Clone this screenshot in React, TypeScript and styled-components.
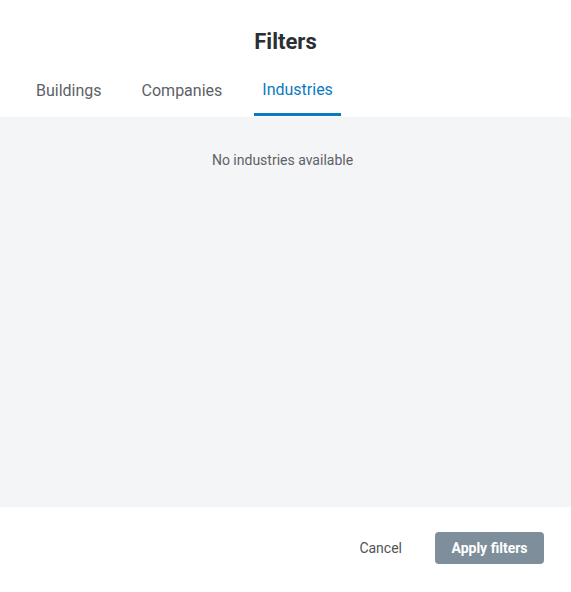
import React, { useState } from "react";
import styled, { createGlobalStyle } from "styled-components";

const Global = createGlobalStyle`
  html, body { margin: 0; padding: 0; background: #ffffff; }
  body { font-family: Roboto, "Noto Sans", Arial, sans-serif; -webkit-font-smoothing: antialiased; }
  * { box-sizing: border-box; }
`;

const Dialog = styled.div`
  width: 571px;
  height: 592px;
  display: flex;
  flex-direction: column;
  background: #ffffff;
`;

const Header = styled.header`
  display: flex;
  flex-direction: column;
  align-items: stretch;
  padding-top: 28px;
`;

const Title = styled.h1`
  margin: 0;
  text-align: center;
  font-size: 22px;
  line-height: 28px;
  font-weight: 700;
  color: #2b2e33;
`;

const TabList = styled.div`
  display: flex;
  gap: 24px;
  padding: 0 28px;
  margin-top: 20px;
`;

const Tab = styled.button<{ $active?: boolean }>`
  border: none;
  background: none;
  padding: 3px 8px 0;
  height: 41px;
  display: flex;
  align-items: flex-start;
  font-family: inherit;
  font-size: 16px;
  line-height: 24px;
  color: ${(p) => (p.$active ? "#0a7bc2" : "#5d6166")};
  border-bottom: 3px solid ${(p) => (p.$active ? "#0a7bc2" : "transparent")};
  cursor: pointer;
  margin-top: ${(p) => (p.$active ? "-1px" : "0")};
`;

const Body = styled.section`
  flex: 1;
  background: #f4f5f7;
  display: flex;
  justify-content: center;
  align-items: flex-start;
  padding: 34px 6px 0 0;
`;

const Empty = styled.p`
  margin: 0;
  font-size: 14px;
  line-height: 18px;
  color: #5d6166;
`;

const Footer = styled.footer`
  height: 85px;
  display: flex;
  justify-content: flex-end;
  align-items: center;
  gap: 33px;
  padding: 0 27px 4px 0;
`;

const TextButton = styled.button`
  border: none;
  background: none;
  padding: 0;
  font-family: inherit;
  font-size: 14px;
  color: #4f5358;
  cursor: pointer;
`;

const PrimaryButton = styled.button`
  border: none;
  background: #7e8f9b;
  color: #ffffff;
  width: 109px;
  height: 32px;
  border-radius: 4px;
  font-family: inherit;
  font-size: 14px;
  font-weight: 700;
  cursor: pointer;
`;

export default function App() {
  const [tab, setTab] = useState("Industries");
  const tabs = ["Buildings", "Companies", "Industries"];
  return (
    <>
      <Global />
      <Dialog>
        <Header>
          <Title>Filters</Title>
          <TabList>
            {tabs.map((t) => (
              <Tab key={t} $active={t === tab} onClick={() => setTab(t)}>
                {t}
              </Tab>
            ))}
          </TabList>
        </Header>
        <Body>
          <Empty>No {tab.toLowerCase()} available</Empty>
        </Body>
        <Footer>
          <TextButton>Cancel</TextButton>
          <PrimaryButton>Apply filters</PrimaryButton>
        </Footer>
      </Dialog>
    </>
  );
}
